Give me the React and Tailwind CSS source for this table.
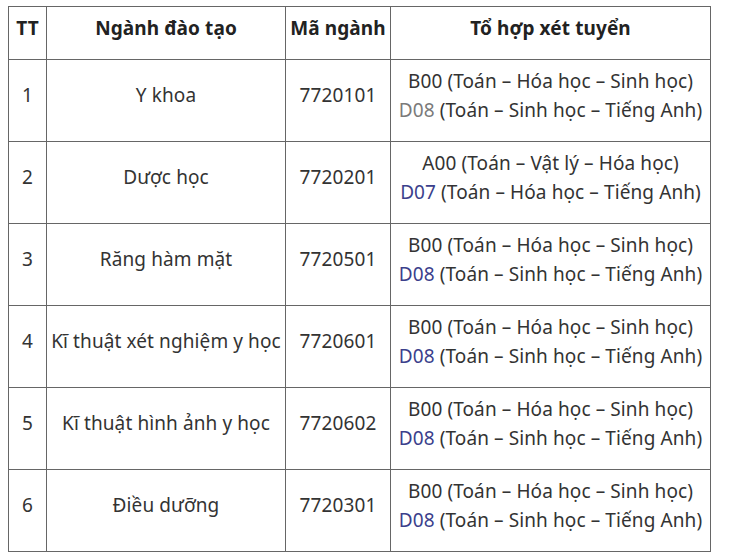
import React from "react";

const rows = [
  { tt: "1", name: "Y khoa", code: "7720101", a: "B00 (Toán – Hóa học – Sinh học)", b: "D08", bRest: " (Toán – Sinh học – Tiếng Anh)", grey: true },
  { tt: "2", name: "Dược học", code: "7720201", a: "A00 (Toán – Vật lý – Hóa học)", b: "D07", bRest: " (Toán – Hóa học – Tiếng Anh)" },
  { tt: "3", name: "Răng hàm mặt", code: "7720501", a: "B00 (Toán – Hóa học – Sinh học)", b: "D08", bRest: " (Toán – Sinh học – Tiếng Anh)" },
  { tt: "4", name: "Kĩ thuật xét nghiệm y học", code: "7720601", a: "B00 (Toán – Hóa học – Sinh học)", b: "D08", bRest: " (Toán – Sinh học – Tiếng Anh)" },
  { tt: "5", name: "Kĩ thuật hình ảnh y học", code: "7720602", a: "B00 (Toán – Hóa học – Sinh học)", b: "D08", bRest: " (Toán – Sinh học – Tiếng Anh)" },
  { tt: "6", name: "Điều dưỡng", code: "7720301", a: "B00 (Toán – Hóa học – Sinh học)", b: "D08", bRest: " (Toán – Sinh học – Tiếng Anh)" },
];

const cell = "border-[1.5px] border-[#666] text-center align-middle px-0 pt-0 pb-[10px]";

export default function App() {
  return (
    <div className="w-[730px] h-[556px] bg-white pt-[6px] pl-[8px] font-['Noto_Sans','Lato',sans-serif] text-[19px] tracking-[0.1px] text-[#333]">
      <table className="table-fixed border-collapse w-[702px]">
        <colgroup>
          <col className="w-[38px]" />
          <col className="w-[239px]" />
          <col className="w-[105px]" />
          <col className="w-[320px]" />
        </colgroup>
        <thead>
          <tr className="h-[53px] font-semibold text-[#222]">
            <th className={cell}>TT</th>
            <th className={cell}>Ngành đào tạo</th>
            <th className={cell}>Mã ngành</th>
            <th className={cell}>Tổ hợp xét tuyển</th>
          </tr>
        </thead>
        <tbody>
          {rows.map((r) => (
            <tr key={r.tt} className="h-[82px]">
              <td className={cell}>{r.tt}</td>
              <td className={cell}>{r.name}</td>
              <td className={cell}>{r.code}</td>
              <td className={`${cell} leading-[29px]`}>
                <div>{r.a}</div>
                <div>
                  <span className={r.grey ? "text-[#7a7a7a]" : "text-[#3b3f8c]"}>{r.b}</span>
                  {r.bRest}
                </div>
              </td>
            </tr>
          ))}
        </tbody>
      </table>
    </div>
  );
}
